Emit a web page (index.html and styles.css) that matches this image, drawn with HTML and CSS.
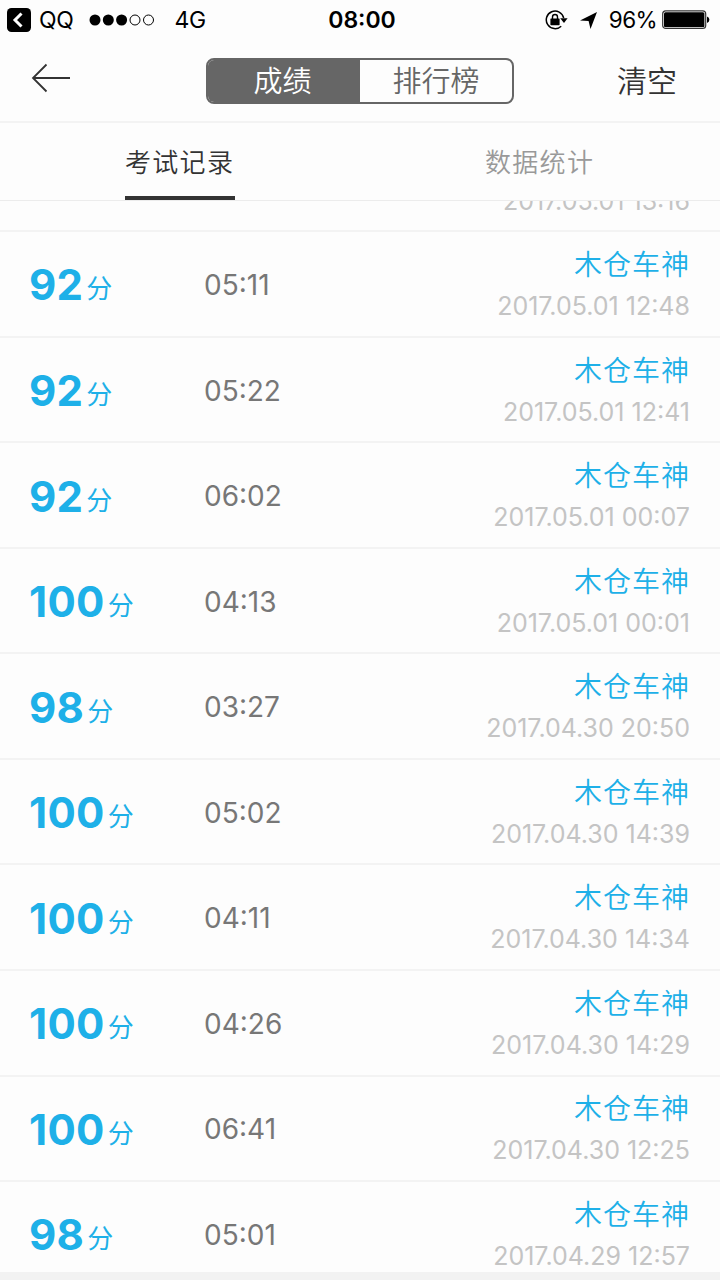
FILE: index.html
```html
<!DOCTYPE html>
<html lang="zh-CN">
<head>
    <meta charset="UTF-8">
    <meta name="viewport" content="width=device-width, initial-scale=1.0">
    <title>成绩</title>

    <!-- styling -->
    <link rel="stylesheet" href="styles.css">
</head>
<body>
    <div class="status-bar">
        <div class="status-left">
            <svg class="back-app" width="24" height="24" viewBox="0 0 24 24">
                <rect width="24" height="24" rx="4.5" fill="#000"/>
                <path d="M14.5 5.5L8 12l6.5 6.5" fill="none" stroke="#fff" stroke-width="3"/>
            </svg>
            <span class="app-name">QQ</span>
            <svg class="signal" width="66" height="12" viewBox="0 0 66 12">
                <circle cx="6" cy="6" r="5.5"/>
                <circle cx="19.3" cy="6" r="5.5"/>
                <circle cx="32.6" cy="6" r="5.5"/>
                <circle cx="46" cy="6" r="5" fill="none" stroke="#000"/>
                <circle cx="59.5" cy="6" r="5" fill="none" stroke="#000"/>
            </svg>
            <span class="network">4G</span>
        </div>
        <span class="clock">08:00</span>
        <div class="status-right">
            <svg class="lock" width="23" height="20" viewBox="0 0 23 20">
                <path d="M16.2 16.2A8.8 8.8 0 1 1 18.7 8" fill="none" stroke="#000" stroke-width="1.5"/>
                <path d="M15.2 8.3h7.4L19 13z"/>
                <rect x="5.4" y="8.4" width="9.2" height="6.8" rx=".6"/>
                <path d="M7.5 9V7a2.5 2.5 0 0 1 5 0v2" fill="none" stroke="#000" stroke-width="1.4"/>
            </svg>
            <svg class="location" width="17" height="17" viewBox="0 0 17 17">
                <path d="M17 0L0 8.5l8.6.6L10.5 17z"/>
            </svg>
            <span class="percent">96%</span>
            <svg class="battery" width="48" height="20" viewBox="0 0 48 20">
                <rect x=".7" y=".9" width="43" height="17.6" rx="3" fill="none" stroke="#333" stroke-width="1.2"/>
                <rect x="2" y="2.2" width="40.4" height="15" rx="1.5"/>
                <path d="M45 6.5q2.4 1 2.4 3.2T45 12.9z"/>
            </svg>
        </div>
    </div>

    <div class="navbar">
        <svg class="back" width="40" height="30" viewBox="0 0 40 30">
            <path d="M15.5 1.5L2 15l13.5 13.5M2 15h37" fill="none" stroke="#333" stroke-width="1.8"/>
        </svg>
        <div class="segment">
            <span class="segment-item active">成绩</span>
            <span class="segment-item">排行榜</span>
        </div>
        <span class="clear">清空</span>
    </div>

    <div class="tabs">
        <div class="tab active"><span>考试记录</span></div>
        <div class="tab"><span>数据统计</span></div>
    </div>

    <div class="records">
        <div class="record-tail">
            <div class="date">2017.05.01 13:16</div>
        </div>
        <ul id="record-list"></ul>
    </div>

    <script>
        const list = document.getElementById("record-list");

        const records = [
            [92, "05:11", "2017.05.01 12:48"],
            [92, "05:22", "2017.05.01 12:41"],
            [92, "06:02", "2017.05.01 00:07"],
            [100, "04:13", "2017.05.01 00:01"],
            [98, "03:27", "2017.04.30 20:50"],
            [100, "05:02", "2017.04.30 14:39"],
            [100, "04:11", "2017.04.30 14:34"],
            [100, "04:26", "2017.04.30 14:29"],
            [100, "06:41", "2017.04.30 12:25"],
            [98, "05:01", "2017.04.29 12:57"]
        ];

        records.forEach(([score, time, date]) => {
            const item = document.createElement("li");
            item.className = "record";
            item.innerHTML = `
                <div class="score"><b>${score}</b><span>分</span></div>
                <div class="time">${time}</div>
                <div class="info">
                    <div class="rank">木仓车神</div>
                    <div class="date">${date}</div>
                </div>`;
            list.appendChild(item);
        });
    </script>
</body>
</html>
```
FILE: styles.css
```css
* {
    box-sizing: border-box;
}

body {
    margin: 0;
    height: 1280px;
    padding-bottom: 8px;
    display: flex;
    flex-direction: column;
    overflow: hidden;
    background-color: #f2f2f2;
    font-family: Inter, "Noto Sans CJK SC", sans-serif;
    color: #333;
}

.status-bar {
    height: 40px;
    flex: none;
    display: grid;
    grid-template-columns: 1fr auto 1fr;
    align-items: center;
    padding: 0 11px 0 7px;
    background-color: #fdfdfd;
    color: #000;
    font-size: 23px;
}

.status-left,
.status-right {
    display: flex;
    align-items: center;
}

.status-right {
    justify-content: flex-end;
}

.app-name {
    margin-left: 8px;
    letter-spacing: -0.3px;
}

.signal {
    margin-left: 15px;
}

.network {
    margin-left: 20px;
    letter-spacing: -0.5px;
}

.clock {
    margin-left: 8px;
    font-weight: 600;
}

.lock {
    margin-right: 12px;
}

.percent {
    margin: 0 5px 0 12px;
    font-size: 22.5px;
    line-height: 24px;
    padding-bottom: 1px;
    letter-spacing: -0.6px;
}

.battery {
    margin-right: -1px;
}

.navbar {
    height: 83px;
    flex: none;
    display: flex;
    align-items: center;
    justify-content: space-between;
    padding: 0 43px 0 31px;
    background-color: #fdfdfd;
    border-bottom: 2px solid #f3f3f3;
}

.back {
    margin-top: -6px;
}

.segment {
    display: flex;
    width: 308px;
    height: 46px;
    margin-left: 32px;
    border: 2px solid #666;
    border-radius: 8px;
    overflow: hidden;
}

.segment-item {
    flex: 1;
    text-align: center;
    line-height: 44px;
    font-size: 29px;
    font-weight: 350;
    color: #666;
}

.segment-item.active {
    flex: none;
    width: 152px;
    padding-right: 3px;
    background-color: #666;
    color: #fff;
}

.clear {
    margin-top: -4px;
    font-size: 30px;
    font-weight: 350;
}

.tabs {
    height: 78px;
    flex: none;
    display: flex;
    justify-content: space-around;
    background-color: #fdfdfd;
    border-bottom: 1px solid #ececec;
}

.tab {
    width: 110px;
    font-size: 26px;
    font-weight: 350;
    letter-spacing: 1.3px;
    line-height: 79px;
    white-space: nowrap;
    color: #999;
}

.tab.active {
    color: #333;
    border-bottom: 4px solid #333;
}

.records {
    flex: 1;
    overflow: hidden;
    background-color: #fdfdfd;
}

/* last visible line of the record scrolled under the tabs */
.record-tail {
    height: 51.2px;
    margin-top: -20px;
    padding-right: 30px;
    text-align: right;
    border-bottom: 2px solid #f3f3f3;
}

#record-list {
    margin: 0;
    padding: 0;
    list-style: none;
}

.record {
    height: 105.55px;
    display: flex;
    align-items: center;
    padding: 2px 30px 0 29px;
    border-bottom: 2px solid #f3f3f3;
}

.score {
    width: 175px;
    color: #1eb0e8;
}

.score b {
    font-size: 42px;
    font-weight: 700;
    letter-spacing: 0.3px;
}

.score span {
    position: relative;
    top: -2px;
    margin-left: 3px;
    font-size: 26px;
}

.time {
    font-size: 28px;
    color: #777;
}

.info {
    flex: 1;
    text-align: right;
}

.rank {
    font-size: 28px;
    font-weight: 350;
    letter-spacing: 1px;
    line-height: 42px;
    color: #1eb0e8;
}

.date {
    font-size: 25px;
    line-height: 40px;
    color: #c4c4c4;
}
```
